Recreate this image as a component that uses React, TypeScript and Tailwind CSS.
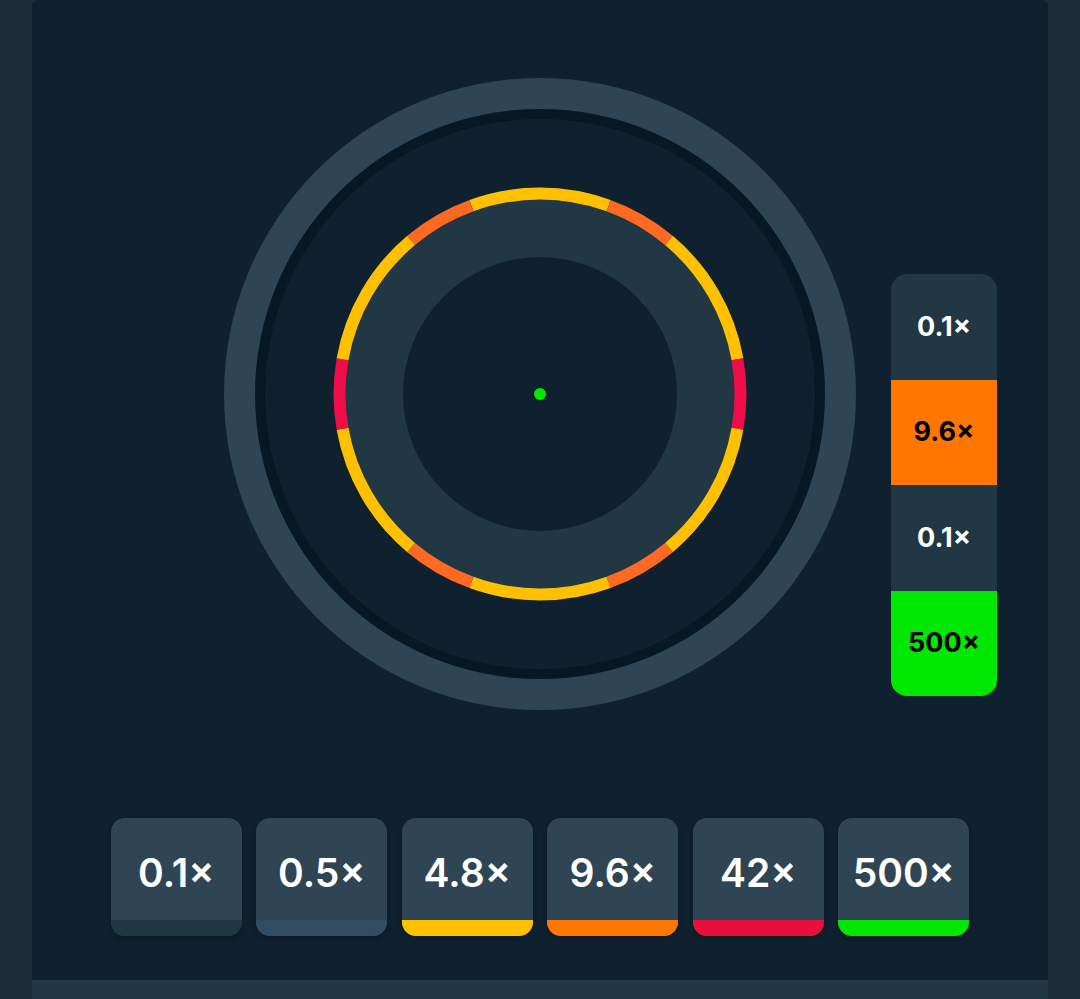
import React from 'react';

const font = { fontFamily: 'Inter, "Open Sans", sans-serif' };

// ring segments in degrees, measured clockwise from the top
const segments = [
  { from: -20, to: 20, color: '#ffc000' },
  { from: 20, to: 40, color: '#ff6a22' },
  { from: 40, to: 80, color: '#ffc000' },
  { from: 80, to: 100, color: '#f00c48' },
  { from: 100, to: 140, color: '#ffc000' },
  { from: 140, to: 160, color: '#ff6a22' },
  { from: 160, to: 200, color: '#ffc000' },
  { from: 200, to: 220, color: '#ff6a22' },
  { from: 220, to: 260, color: '#ffc000' },
  { from: 260, to: 280, color: '#f00c48' },
  { from: 280, to: 320, color: '#ffc000' },
  { from: 320, to: 340, color: '#ff6a22' },
];

const arc = (cx: number, cy: number, r: number, a0: number, a1: number) => {
  const p = (a: number) => {
    const rad = ((a - 90) * Math.PI) / 180;
    return [cx + r * Math.cos(rad), cy + r * Math.sin(rad)];
  };
  const [x0, y0] = p(a0);
  const [x1, y1] = p(a1);
  const large = a1 - a0 > 180 ? 1 : 0;
  return `M ${x0} ${y0} A ${r} ${r} 0 ${large} 1 ${x1} ${y1}`;
};

const Wheel = () => (
  <svg width="632" height="632" viewBox="0 0 632 632">
    <circle cx="316" cy="316" r="316" fill="#2f4553" />
    <circle cx="316" cy="316" r="285" fill="#071824" />
    <circle cx="316" cy="316" r="275" fill="#0f212e" />
    <circle cx="316" cy="316" r="196" fill="#213743" />
    {segments.map((s, i) => (
      <path key={i} d={arc(316, 316, 200.5, s.from, s.to)} stroke={s.color} strokeWidth="12" fill="none" />
    ))}
    <circle cx="316" cy="316" r="137" fill="#0f212e" />
    <circle cx="316" cy="316" r="6" fill="#00e701" />
  </svg>
);

const history = [
  { label: '0.1×', bg: 'bg-[#213743]', text: 'text-white' },
  { label: '9.6×', bg: 'bg-[#ff7700]', text: 'text-black' },
  { label: '0.1×', bg: 'bg-[#213743]', text: 'text-white' },
  { label: '500×', bg: 'bg-[#00e701]', text: 'text-black' },
];

const payouts = [
  { label: '0.1×', bar: 'bg-[#213743]' },
  { label: '0.5×', bar: 'bg-[#304d61]' },
  { label: '4.8×', bar: 'bg-[#ffc000]' },
  { label: '9.6×', bar: 'bg-[#ff7700]' },
  { label: '42×', bar: 'bg-[#e9113c]' },
  { label: '500×', bar: 'bg-[#00e701]' },
];

export default function App() {
  return (
    <div className="h-[999px] overflow-hidden bg-[#1a2c38] px-8" style={font}>
      <div className="flex h-[980px] flex-col rounded-t-[6px] bg-[#0f212e]">
        {/* wheel + history column */}
        <div className="grid grid-cols-[192px_632px_192px] pt-[78px]">
          <div />
          <Wheel />
          <div className="pl-[35px] pt-[196px]">
            <div className="flex w-[106px] flex-col overflow-hidden rounded-2xl">
              {history.map((h, i) => (
                <div
                  key={i}
                  className={`flex h-[105.5px] items-center justify-center text-[27px] font-bold ${h.bg} ${h.text}`}
                >
                  {h.label}
                </div>
              ))}
            </div>
          </div>
        </div>

        {/* payout buttons */}
        <div className="mt-[108px] flex justify-center gap-[14.5px]">
          {payouts.map((p, i) => (
            <div
              key={i}
              className="flex h-[118px] w-[131px] flex-col overflow-hidden rounded-[14px] bg-[#2f4553] shadow-[0_2px_4px_rgba(0,0,0,0.25)]"
            >
              <div className="flex flex-1 items-center justify-center pt-[9px] text-[39px] font-semibold text-white">
                {p.label}
              </div>
              <div className={`h-[16px] ${p.bar}`} />
            </div>
          ))}
        </div>
      </div>
      <div className="h-[19px] bg-[#213743]" />
    </div>
  );
}
